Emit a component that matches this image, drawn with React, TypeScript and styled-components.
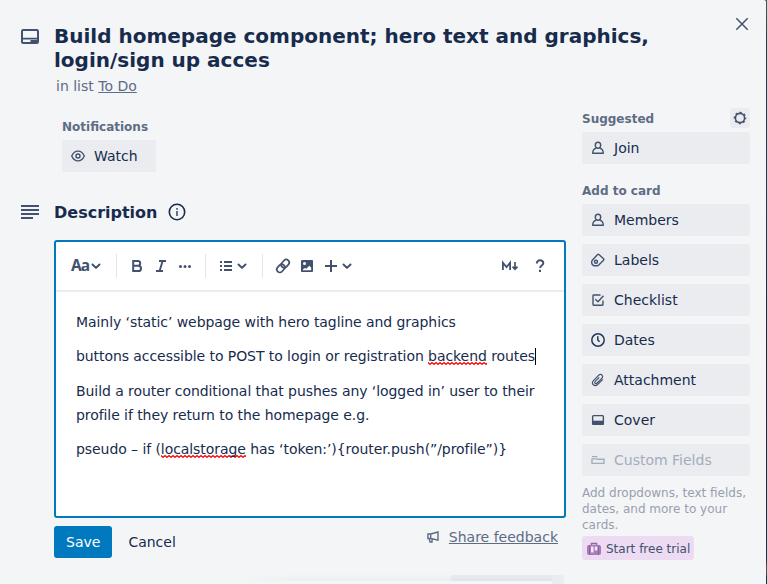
import React from "react";
import styled, { createGlobalStyle } from "styled-components";

const ink = "#172b4d";
const icon = "#42526e";
const muted = "#5e6c84";

const GlobalStyle = createGlobalStyle`
  * { box-sizing: border-box; }
  body {
    margin: 0;
    overflow: hidden;
    background: #f4f5f7;
    color: ${ink};
    font: 14px/20px "DejaVu Sans", sans-serif;
  }
`;

const Board = styled.div`
  height: 584px;
  overflow: hidden;
  padding-right: 1px;
  background: linear-gradient(#2c6462 0, #0b4750 8%, #034a58 30%, #02303f 60%, #023a4c 96%, #45525c 97%, #45525c 98%, #023a4c 99%);
`;

const Dialog = styled.div`
  height: 584px;
  padding: 24px 16px 0 20px;
  background: #f4f5f7;
  border-radius: 0 2px 0 0;
  position: relative;
  overflow: hidden;
`;

const Glyph = styled.svg<{ $size?: number }>`
  display: block;
  flex: none;
  width: ${(p) => p.$size ?? 16}px;
  height: ${(p) => p.$size ?? 16}px;
  fill: none;
  stroke: currentColor;
  stroke-width: 1.4;
  color: ${icon};
`;

const CloseButton = styled.button`
  position: absolute;
  top: 14px;
  right: 14px;
  width: 20px;
  height: 20px;
  padding: 0;
  border: 0;
  background: none;
  display: grid;
  place-items: center;
`;

const Header = styled.header`
  display: flex;
  gap: 14px;
  height: 82px;
`;

const HeaderIcon = styled.div`
  padding-top: 2px;
`;

const Title = styled.h2`
  margin: 0 0 4px;
  width: 620px;
  font-size: 20px;
  line-height: 24px;
  font-weight: 700;
`;

const InList = styled.p`
  margin: 0 0 0 2px;
  color: ${muted};
`;

const Link = styled.a`
  color: inherit;
  text-decoration: underline;
`;

const Columns = styled.div`
  display: flex;
  gap: 16px;
`;

const Main = styled.main`
  width: 546px;
  padding-top: 11px;
`;

const Notifications = styled.section`
  padding-left: 42px;
`;

const SmallHeading = styled.h3`
  margin: 0;
  font-size: 12px;
  line-height: 20px;
  color: ${muted};
`;

const CardButton = styled.button<{ $width?: number; $disabled?: boolean }>`
  display: flex;
  align-items: center;
  gap: 8px;
  width: ${(p) => (p.$width ? `${p.$width}px` : "100%")};
  height: 32px;
  padding: 0 8px;
  border: 0;
  border-radius: 3px;
  background: #eaecf0;
  color: ${(p) => (p.$disabled ? "#a5adba" : ink)};
  font: inherit;
  text-align: left;
  ${Glyph} { color: ${(p) => (p.$disabled ? "#a5adba" : icon)}; }
`;

const WatchRow = styled.div`
  padding-top: 3px;
`;

const SectionHeading = styled.div`
  display: flex;
  align-items: center;
  height: 24px;
  margin: 28px 0 16px;
  gap: 10px;
  h3 { margin: 0 0 0 4px; padding-top: 2px; font-size: 16px; line-height: 24px; }
`;

const Editor = styled.div`
  margin-left: 34px;
  height: 278px;
  border: 2px solid #0079bf;
  border-radius: 3px;
  background: #fff;
`;

const Toolbar = styled.div`
  display: flex;
  align-items: center;
  height: 50px;
  padding: 0 6px 0 15px;
  border-bottom: 2px solid #ebecf0;
  color: ${icon};
`;

const Tool = styled.span<{ $w: number }>`
  display: flex;
  align-items: center;
  justify-content: center;
  width: ${(p) => p.$w}px;
  height: 24px;
`;

const TextStyle = styled.span`
  width: 18px;
  font: 700 15.5px/22px "Noto Sans", sans-serif;
  letter-spacing: -0.9px;
  padding-bottom: 2px;
`;

const Divider = styled.span<{ $before: number; $after: number }>`
  width: 1px;
  height: 24px;
  margin: 0 ${(p) => p.$after}px 0 ${(p) => p.$before}px;
  background: #e3e5ea;
`;

const Spacer = styled.span`
  flex: 1;
`;

const Content = styled.div`
  padding: 18px 20px;
  line-height: 24px;
  letter-spacing: -0.005em;
  white-space: nowrap;
  p { margin: 0 0 10.3px; }
`;

const squiggle =
  "data:image/svg+xml,%3Csvg xmlns='http://www.w3.org/2000/svg' width='4' height='3'%3E%3Cpath d='M-1 .7 0 .7 2 2.300 4 .7 5 .7' fill='none' stroke='red' stroke-width='1.300'/%3E%3C/svg%3E";

const Misspelled = styled.span`
  padding-bottom: 1px;
  background: url("${squiggle}") repeat-x left bottom / 4px 3px;
`;

const Caret = styled.span`
  display: inline-block;
  width: 1px;
  height: 17px;
  margin-right: -1px;
  vertical-align: -4px;
  background: #000;
`;

const Actions = styled.div`
  display: flex;
  align-items: flex-start;
  margin: 8px 8px 0 34px;
`;

const ActionButton = styled.button<{ $primary?: boolean }>`
  height: 32px;
  padding: 0 ${(p) => (p.$primary ? 12 : 16)}px;
  border: 0;
  border-radius: 3px;
  background: ${(p) => (p.$primary ? "#0079bf" : "transparent")};
  color: ${(p) => (p.$primary ? "#fff" : ink)};
  font: inherit;
`;

const Feedback = styled.div`
  display: flex;
  align-items: center;
  gap: 8px;
  height: 20px;
  margin: 1px 0 0 auto;
  color: ${muted};
  ${Glyph} { color: ${muted}; }
`;

const ActivityEdge = styled.div`
  position: relative;
  height: 20px;
  margin: 17px 2px 0 auto;
  width: 113px;
  border-radius: 3px 3px 0 0;
  background: #eaecf0;
`;

const FloatingEdge = styled.div`
  position: absolute;
  top: 6px;
  right: 12px;
  width: 301px;
  height: 20px;
  background: linear-gradient(90deg, #f4f5f700, #f4f5f7 12px);
  &::before {
    content: "";
    position: absolute;
    left: -10px;
    right: 0;
    top: -7px;
    height: 7px;
    background: linear-gradient(transparent, rgba(9, 30, 66, 0.035));
    mask-image: linear-gradient(90deg, transparent, #000 60px);
  }
`;

const Sidebar = styled.aside`
  width: 168px;
  padding-top: 2px;
`;

const SidebarTop = styled.div`
  display: flex;
  justify-content: space-between;
  height: 24px;
  ${SmallHeading} { padding-top: 1px; }
`;

const GearButton = styled.button`
  width: 20px;
  height: 20px;
  padding: 0;
  border: 0;
  border-radius: 3px;
  background: #eaecf0;
  display: grid;
  place-items: center;
`;

const ButtonList = styled.div`
  display: flex;
  flex-direction: column;
  gap: 8px;
  margin: 3px 0 9px;
`;

const AddHeading = styled(SmallHeading)`
  margin-top: 17px;
`;

const Hint = styled.p`
  margin: 0 0 3px;
  font-size: 12px;
  line-height: 16px;
  color: #97a0af;
`;

const Trial = styled.button`
  display: flex;
  align-items: center;
  gap: 5px;
  width: 112px;
  height: 24px;
  padding: 1px 0 0 5px;
  border: 0;
  border-radius: 3px;
  background: #eddbf4;
  color: ${icon};
  font: 12px "DejaVu Sans", sans-serif;
  white-space: nowrap;
`;

const Person = () => (
  <Glyph viewBox="0 0 16 16">
    <ellipse cx="8" cy="5.3" rx="2.7" ry="3" />
    <path d="M6.2 8.200C3.800 9 2.700 10.800 2.700 13.300h10.600c0-2.500-1.100-4.300-3.500-5.100" strokeLinejoin="round" />
  </Glyph>
);

const Chevron = () => (
  <Glyph viewBox="0 0 16 16">
    <path d="M4.500 6.500 8 9.900l3.500-3.400" strokeWidth="2" strokeLinecap="round" strokeLinejoin="round" />
  </Glyph>
);

const items: { label: string; glyph: React.ReactNode; disabled?: boolean }[] = [
  { label: "Members", glyph: <Person /> },
  {
    label: "Labels",
    glyph: (
      <Glyph viewBox="0 0 16 16">
        <path d="M2.3 8.2 7.6 2.5q.6-.6 1.3 0l4.6 4.3q.6.7 0 1.4l-5 5q-.5.5-1.2.5H4.3Q1.9 13.2 1.7 10.7 1.6 9.2 2.3 8.2Z" />
        <circle cx="6" cy="9.8" r="1.5" />
      </Glyph>
    ),
  },
  {
    label: "Checklist",
    glyph: (
      <Glyph viewBox="0 0 16 16">
        <path d="M10.5 3H3.7Q3 3 3 3.7v8.8q0 .7.7.7h8.6q.7 0 .7-.7V8.5M5.300 7.200 8 9.800l5.500-6" />
      </Glyph>
    ),
  },
  {
    label: "Dates",
    glyph: (
      <Glyph viewBox="0 0 16 16">
        <circle cx="8" cy="8" r="6.2" stroke="#253858" strokeWidth="1.5" />
        <path d="M7.8 4.2V8l1.800 1.800" stroke="#253858" strokeWidth="1.5" />
      </Glyph>
    ),
  },
  {
    label: "Attachment",
    glyph: (
      <Glyph viewBox="0 0 16 16">
        <path d="m12.800 7.300-5 5c-3.300 3.300-7.300-.7-4.100-4l4.900-4.900c2.500-2.500 5.600.6 3.200 3l-4.600 4.600c-1.600 1.600-3.300-.2-1.900-1.700l3.900-3.900" strokeWidth="1.2" />
      </Glyph>
    ),
  },
  {
    label: "Cover",
    glyph: (
      <Glyph viewBox="0 0 16 16">
        <rect x="2.650" y="3.650" width="10.700" height="8.700" rx=".8" />
        <path d="M2.500 8.700h11V13h-11z" fill="currentColor" stroke="none" />
      </Glyph>
    ),
  },
  {
    label: "Custom Fields",
    disabled: true,
    glyph: (
      <Glyph viewBox="0 0 16 16">
        <path d="M2 4.600h5.500M2 11.400h12V7.200H7.200L6.400 6.900H2Z" />
      </Glyph>
    ),
  },
];

export default function App() {
  return (
    <Board>
      <GlobalStyle />
      <Dialog>
        <CloseButton aria-label="Close">
          <Glyph $size={20} viewBox="0 0 20 20">
            <path d="m4.300 4.300 11.400 11.400M15.700 4.300 4.300 15.700" strokeWidth="1.500" />
          </Glyph>
        </CloseButton>
        <Header>
          <HeaderIcon>
            <Glyph $size={20} viewBox="0 0 20 20">
              <rect x="2" y="4" width="16" height="13" rx="1.200" strokeWidth="2" />
              <path d="M2 12.600h16M10.500 15H18" strokeWidth="1.800" />
            </Glyph>
          </HeaderIcon>
          <div>
            <Title>Build homepage component; hero text and graphics, login/sign up acces</Title>
            <InList>in list <Link>To Do</Link></InList>
          </div>
        </Header>
        <Columns>
          <Main>
            <Notifications>
              <SmallHeading>Notifications</SmallHeading>
              <WatchRow>
                <CardButton $width={94}>
                  <Glyph viewBox="0 0 16 16">
                    <path d="M1.700 8q2.200-4.900 6.300-4.900T14.300 8q-2.200 4.900-6.300 4.900T1.700 8Z" />
                    <circle cx="8" cy="8" r="2" />
                  </Glyph>
                  Watch
                </CardButton>
              </WatchRow>
            </Notifications>
            <SectionHeading>
              <Glyph $size={20} viewBox="0 0 20 20">
                <path d="M1 4h18M1 8h18M1 12h18M1 16h12" strokeWidth="1.900" />
              </Glyph>
              <h3>Description</h3>
              <Glyph $size={20} viewBox="0 0 20 20">
                <circle cx="10" cy="10" r="7.700" stroke="#172b4d" strokeWidth="1.600" />
                <path d="M10 9v5M10 6.100v1.600" strokeWidth="1.600" />
              </Glyph>
            </SectionHeading>
            <Editor>
              <Toolbar>
                <TextStyle>Aa</TextStyle>
                <Tool $w={14}><Chevron /></Tool>
                <Divider $before={13} $after={8} />
                <Tool $w={24}>
                  <Glyph $size={24} viewBox="0 0 24 24">
                    <path d="M8.200 7h4.600a2.300 2.300 0 0 1 0 4.800H8.200ZM8.200 11.800h5.200a2.600 2.600 0 0 1 0 5.200H8.200Z" strokeWidth="2" />
                  </Glyph>
                </Tool>
                <Tool $w={24}>
                  <Glyph $size={24} viewBox="0 0 24 24">
                    <path d="M10 7h7M7 17h7M13.600 7l-3 10" strokeWidth="1.900" />
                  </Glyph>
                </Tool>
                <Tool $w={24}>
                  <Glyph $size={24} viewBox="0 0 24 24">
                    <path d="M7.500 12.500h.01M12 12.500h.01M16.500 12.500h.01" strokeWidth="3" strokeLinecap="round" />
                  </Glyph>
                </Tool>
                <Divider $before={8} $after={8} />
                <Tool $w={24}>
                  <Glyph $size={24} viewBox="0 0 24 24">
                    <path d="M10 8h8M10 12h8M10 16h8M6 8h2M6 12h2M6 16h2" strokeWidth="2" />
                  </Glyph>
                </Tool>
                <Tool $w={8}><Chevron /></Tool>
                <Divider $before={16} $after={8} />
                <Tool $w={24}>
                  <Glyph $size={24} viewBox="0 0 24 24">
                    <g transform="rotate(-47 12 12)" strokeWidth="1.700">
                      <rect x="4.300" y="9" width="9" height="6" rx="3" />
                      <rect x="10.700" y="9" width="9" height="6" rx="3" />
                    </g>
                  </Glyph>
                </Tool>
                <Tool $w={24}>
                  <Glyph $size={24} viewBox="0 0 24 24">
                    <rect x="6" y="6" width="12" height="12" rx="1" fill="currentColor" stroke="none" />
                    <circle cx="9.500" cy="9.500" r="1.500" fill="#fff" stroke="none" />
                    <path d="M8 16.300v-1l2-1.300 1.300.7 3-3 1.900 2v2.600Z" fill="#fff" stroke="none" />
                  </Glyph>
                </Tool>
                <Tool $w={24}>
                  <Glyph $size={24} viewBox="0 0 24 24">
                    <path d="M6 12h12M12 6v12" strokeWidth="2" />
                  </Glyph>
                </Tool>
                <Tool $w={8}><Chevron /></Tool>
                <Spacer />
                <Tool $w={24}>
                  <Glyph $size={24} viewBox="0 0 24 24">
                    <path d="M4.900 16V8.700L8.500 13l3.600-4.300V16" strokeWidth="1.800" />
                    <path d="M17 8v7M14.500 12.700 17 15.200l2.500-2.500" strokeWidth="1.700" />
                  </Glyph>
                </Tool>
                <Tool $w={36}>
                  <Glyph $size={24} viewBox="0 0 24 24">
                    <path d="M8.800 9.500c0-4.400 6.700-4 6.500-.2-.1 2.300-3.200 2.200-3.200 4.700M12 15.800v2.100" strokeWidth="2" />
                  </Glyph>
                </Tool>
              </Toolbar>
              <Content>
                <p>Mainly ‘static’ webpage with hero tagline and graphics</p>
                <p>buttons accessible to POST to login or registration <Misspelled>backend</Misspelled> routes<Caret /></p>
                <p>Build a router conditional that pushes any ‘logged in’ user to their<br />profile if they return to the homepage e.g.</p>
                <p>pseudo – if (<Misspelled>localstorage</Misspelled> has ‘token:’){"{"}router.push(”/profile”){"}"}</p>
              </Content>
            </Editor>
            <Actions>
              <ActionButton $primary>Save</ActionButton>
              <ActionButton>Cancel</ActionButton>
              <Feedback>
                <Glyph viewBox="0 0 16 16">
                  <path d="m5.700 5 7.300-2v8.200L5.700 9.500ZM5.700 5H2.900v4.500h2.800M4.200 9.700l.8 3.300h2v-3" />
                </Glyph>
                <Link>Share feedback</Link>
              </Feedback>
            </Actions>
            <ActivityEdge><FloatingEdge /></ActivityEdge>
          </Main>
          <Sidebar>
            <SidebarTop>
              <SmallHeading>Suggested</SmallHeading>
              <GearButton aria-label="Settings">
                <Glyph viewBox="0 0 16 16">
                  <circle cx="8" cy="8" r="4.600" strokeWidth="1.600" />
                  <circle cx="8" cy="8" r="5.600" strokeWidth="1.300" strokeDasharray="2.199" strokeDashoffset="1.100" />
                </Glyph>
              </GearButton>
            </SidebarTop>
            <CardButton><Person />Join</CardButton>
            <AddHeading>Add to card</AddHeading>
            <ButtonList>
              {items.map((item) => (
                <CardButton key={item.label} $disabled={item.disabled}>
                  {item.glyph}
                  {item.label}
                </CardButton>
              ))}
            </ButtonList>
            <Hint>Add dropdowns, text fields, dates, and more to your cards.</Hint>
            <Trial>
              <Glyph $size={14} viewBox="0 0 14 14">
                <rect x="0" y="3" width="14" height="10" rx="2" fill="#a67db8" stroke="none" />
                <path d="M4.500 3V1.500h5V3" stroke="#8f65a4" />
                <path d="M2.500 3v10M11.500 3v10" stroke="#8f5f9f" strokeWidth="1" />
                <path d="M4 4.500h2.500v6H4zM7.800 4.500h2.500v4H7.800z" fill="#f3e7f7" stroke="none" />
              </Glyph>
              Start free trial
            </Trial>
          </Sidebar>
        </Columns>
      </Dialog>
    </Board>
  );
}
